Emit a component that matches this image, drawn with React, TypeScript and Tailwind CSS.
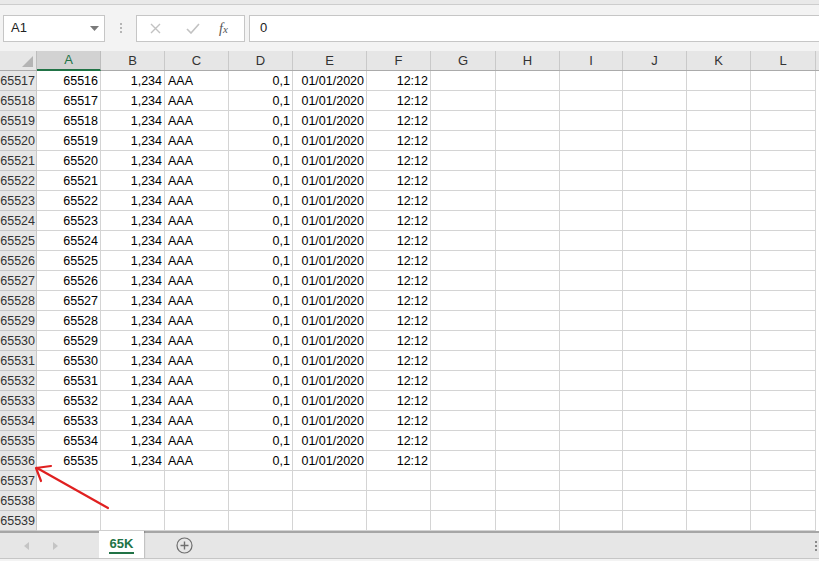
import React from 'react';

const cols = [
    { name: 'A', w: 64 },
    { name: 'B', w: 64 },
    { name: 'C', w: 64 },
    { name: 'D', w: 64 },
    { name: 'E', w: 74 },
    { name: 'F', w: 64 },
    { name: 'G', w: 65 },
    { name: 'H', w: 64 },
    { name: 'I', w: 63 },
    { name: 'J', w: 64 },
    { name: 'K', w: 64 },
    { name: 'L', w: 65 },
];

const rows = Array.from({ length: 23 }, (_, i) => 65517 + i);

const cellValue = (row: number, col: string) => {
    if (row > 65536) return '';
    switch (col) {
        case 'A': return String(row - 1);
        case 'B': return '1,234';
        case 'C': return 'AAA';
        case 'D': return '0,1';
        case 'E': return '01/01/2020';
        case 'F': return '12:12';
        default: return '';
    }
};

const FormulaBar = () => (
    <div className="h-[46px] bg-[#f3f3f3] flex items-center pl-[3px] gap-0">
        {/* Name box */}
        <div className="w-[102px] h-[27px] bg-white border border-[#c6c6c6] flex items-center justify-between pl-[7px] pr-[5px]">
            <span className="text-[13px] text-[#222]">A1</span>
            <svg width="9" height="5" viewBox="0 0 9 5"><path d="M0 0 L9 0 L4.5 5 Z" fill="#7a7a7a" /></svg>
        </div>
        <div className="w-[31px] flex flex-col items-center gap-[2px]">
            <span className="w-[2px] h-[2px] bg-[#b5b5b5]" />
            <span className="w-[2px] h-[2px] bg-[#b5b5b5]" />
            <span className="w-[2px] h-[2px] bg-[#b5b5b5]" />
        </div>
        {/* Cancel / enter / fx */}
        <div className="w-[109px] h-[27px] bg-white border border-[#c6c6c6] flex items-center">
            <svg className="ml-[13px]" width="11" height="11" viewBox="0 0 11 11">
                <path d="M1 1 L10 10 M10 1 L1 10" stroke="#c2c2c2" strokeWidth="1.4" />
            </svg>
            <svg className="ml-[25px]" width="14" height="11" viewBox="0 0 14 11">
                <path d="M1 6 L5 10 L13 1" stroke="#c2c2c2" strokeWidth="1.6" fill="none" />
            </svg>
            <span className="ml-[19px] text-[14px] italic text-[#555]" style={{ fontFamily: '"Liberation Serif", serif' }}>f<span className="text-[11px]">x</span></span>
        </div>
        <div className="ml-[4px] flex-1 h-[27px] bg-white border border-[#c6c6c6] border-r-0 flex items-center pl-[10px]">
            <span className="text-[13px] text-[#222]">0</span>
        </div>
    </div>
);

const HeaderRow = () => (
    <div className="flex h-[20px] bg-[#e6e6e6] border-b border-[#ababab]">
        <div className="w-[37px] shrink-0 border-r border-[#bdbdbd] relative">
            <svg className="absolute right-[3px] bottom-[3px]" width="11" height="11" viewBox="0 0 11 11">
                <path d="M11 0 L11 11 L0 11 Z" fill="#b4b4b4" />
            </svg>
        </div>
        {cols.map(c => (
            <div
                key={c.name}
                style={{ width: c.w }}
                className={
                    c.name === 'A'
                        ? 'shrink-0 flex items-center justify-center text-[13px] text-[#217346] bg-[#d2d2d2] border-r border-[#bdbdbd] border-b-2 border-b-[#217346] -mb-px'
                        : 'shrink-0 flex items-center justify-center text-[13px] text-[#333] border-r border-[#c9c9c9]'
                }
            >
                {c.name}
            </div>
        ))}
    </div>
);

const Grid = () => (
    <div className="flex flex-col">
        {rows.map(r => (
            <div key={r} className="flex h-[20px]">
                <div className="w-[37px] shrink-0 bg-[#e6e6e6] border-r border-b border-[#c9c9c9] flex items-center pt-px text-[12.5px] text-[#333] overflow-hidden whitespace-nowrap justify-end pr-[1px]">
                    {r}
                </div>
                {cols.map(c => {
                    const v = cellValue(r, c.name);
                    return (
                        <div
                            key={c.name}
                            style={{ width: c.w }}
                            className={
                                c.name === 'C'
                                    ? 'shrink-0 border-r border-b border-[#d4d4d4] flex items-center pt-px text-[12.5px] text-black pl-[3px] whitespace-nowrap'
                                    : 'shrink-0 border-r border-b border-[#d4d4d4] flex items-center pt-px justify-end text-[12.5px] text-black pr-[2px] whitespace-nowrap'
                            }
                        >
                            {v}
                        </div>
                    );
                })}
            </div>
        ))}
    </div>
);

const TabBar = () => (
    <div className="h-[30px] flex flex-col">
        <div className="h-[27px] bg-[#e6e6e6] border-t-2 border-[#a6a6a6] flex items-stretch">
            <div className="w-[99px] flex items-center">
                <svg className="ml-[24px]" width="6" height="8" viewBox="0 0 6 8"><path d="M5 0 L0 4 L5 8 Z" fill="#c4c4c4" /></svg>
                <svg className="ml-[22px]" width="6" height="8" viewBox="0 0 6 8"><path d="M1 0 L6 4 L1 8 Z" fill="#c4c4c4" /></svg>
            </div>
            <div className="w-[45px] bg-white flex items-start justify-center -mt-[2px] shadow-[1px_0_1px_rgba(0,0,0,0.15)]">
                <span className="mt-[4px] text-[13px] font-bold text-[#217346] border-b-2 border-[#217346] leading-[17px] px-[1px]">65K</span>
            </div>
            <div className="ml-[32px] flex items-center">
                <svg width="17" height="17" viewBox="0 0 17 17">
                    <circle cx="8.5" cy="8.5" r="7.5" fill="none" stroke="#6e6e6e" strokeWidth="1.2" />
                    <path d="M8.5 4.5 V12.5 M4.5 8.5 H12.5" stroke="#6e6e6e" strokeWidth="1.4" />
                </svg>
            </div>
            <div className="flex-1" />
            <div className="w-[4px] flex flex-col justify-center gap-[2px]">
                <span className="w-[2px] h-[2px] bg-[#8a8a8a]" />
                <span className="w-[2px] h-[2px] bg-[#8a8a8a]" />
                <span className="w-[2px] h-[2px] bg-[#8a8a8a]" />
            </div>
        </div>
        <div className="h-[3px] bg-[#f3f3f3] border-t border-[#c6c6c6]" />
    </div>
);

export default function App() {
    return (
        <div
            className="w-[819px] h-[561px] overflow-hidden bg-white relative"
            style={{ fontFamily: '"Liberation Sans", Arial, sans-serif' }}
        >
            <div className="h-[5px] bg-[#e9e9e9] border-b border-[#cdcdcd]" />
            <FormulaBar />
            <HeaderRow />
            <Grid />
            <TabBar />
            {/* Red annotation arrow */}
            <svg className="absolute left-0 top-0 pointer-events-none" width="819" height="561" viewBox="0 0 819 561">
                <path d="M108 508 L37 468" stroke="#e02020" strokeWidth="2.2" strokeLinecap="round" />
                <path d="M36 468 L51 466 M36 468 L41 481" stroke="#e02020" strokeWidth="2.2" strokeLinecap="round" strokeLinejoin="round" fill="none" />
            </svg>
        </div>
    );
}
